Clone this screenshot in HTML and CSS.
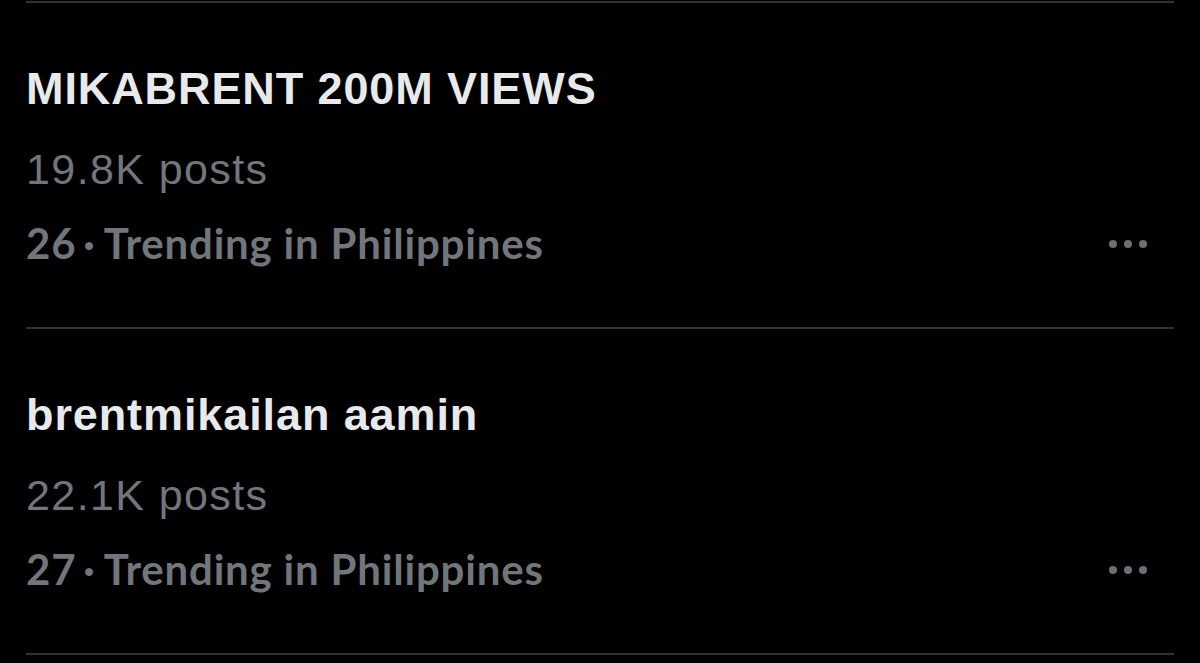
FILE: index.html
```html
<!DOCTYPE html>
<html lang="en">
<head>
    <meta charset="UTF-8">
    <meta name="viewport" content="width=device-width, initial-scale=1.0">
    <title>Trending</title>
    <link rel="stylesheet" href="styles.css">
</head>
<body>
    <ul class="trends">
        <li class="trend">
            <div class="trend-name">MIKABRENT 200M VIEWS</div>
            <div class="trend-count">19.8K posts</div>
            <div class="trend-meta">
                <span>26<span class="sep">·</span>Trending in Philippines</span>
                <svg class="more" width="40" height="10" viewBox="0 0 40 10">
                    <circle cx="5" cy="5" r="4"/>
                    <circle cx="20" cy="5" r="4"/>
                    <circle cx="35" cy="5" r="4"/>
                </svg>
            </div>
        </li>
        <li class="trend">
            <div class="trend-name">brentmikailan aamin</div>
            <div class="trend-count">22.1K posts</div>
            <div class="trend-meta">
                <span>27<span class="sep">·</span>Trending in Philippines</span>
                <svg class="more" width="40" height="10" viewBox="0 0 40 10">
                    <circle cx="5" cy="5" r="4"/>
                    <circle cx="20" cy="5" r="4"/>
                    <circle cx="35" cy="5" r="4"/>
                </svg>
            </div>
        </li>
    </ul>
</body>
</html>
```

FILE: styles.css
```css
html,body{
    margin:0;
    padding:0;
    background:#000;
}
.trends{
    margin:1px 26px 0;
    padding:0;
    list-style:none;
    border-bottom:2px solid #2f3336;
}
.trend{
    border-top:2px solid #2f3336;
    padding:44px 0 47px;
}
.trend-name{
    font-family:"Liberation Sans",Arial,sans-serif;
    font-weight:bold;
    font-size:45px;
    line-height:84px;
    letter-spacing:0.9px;
    color:#e7e9ea;
}
.trend-count{
    font-family:"Liberation Sans",Arial,sans-serif;
    font-size:43px;
    line-height:76px;
    letter-spacing:1.4px;
    color:#71767b;
}
.trend-meta{
    display:flex;
    justify-content:space-between;
    align-items:center;
    font-family:Lato,"Liberation Sans",sans-serif;
    font-weight:bold;
    font-size:42px;
    line-height:73px;
    letter-spacing:0.8px;
    color:#71767b;
}
.sep{
    margin:0 8px 0 7px;
}
.more{
    fill:#6b6f73;
    margin-right:26px;
}
```
